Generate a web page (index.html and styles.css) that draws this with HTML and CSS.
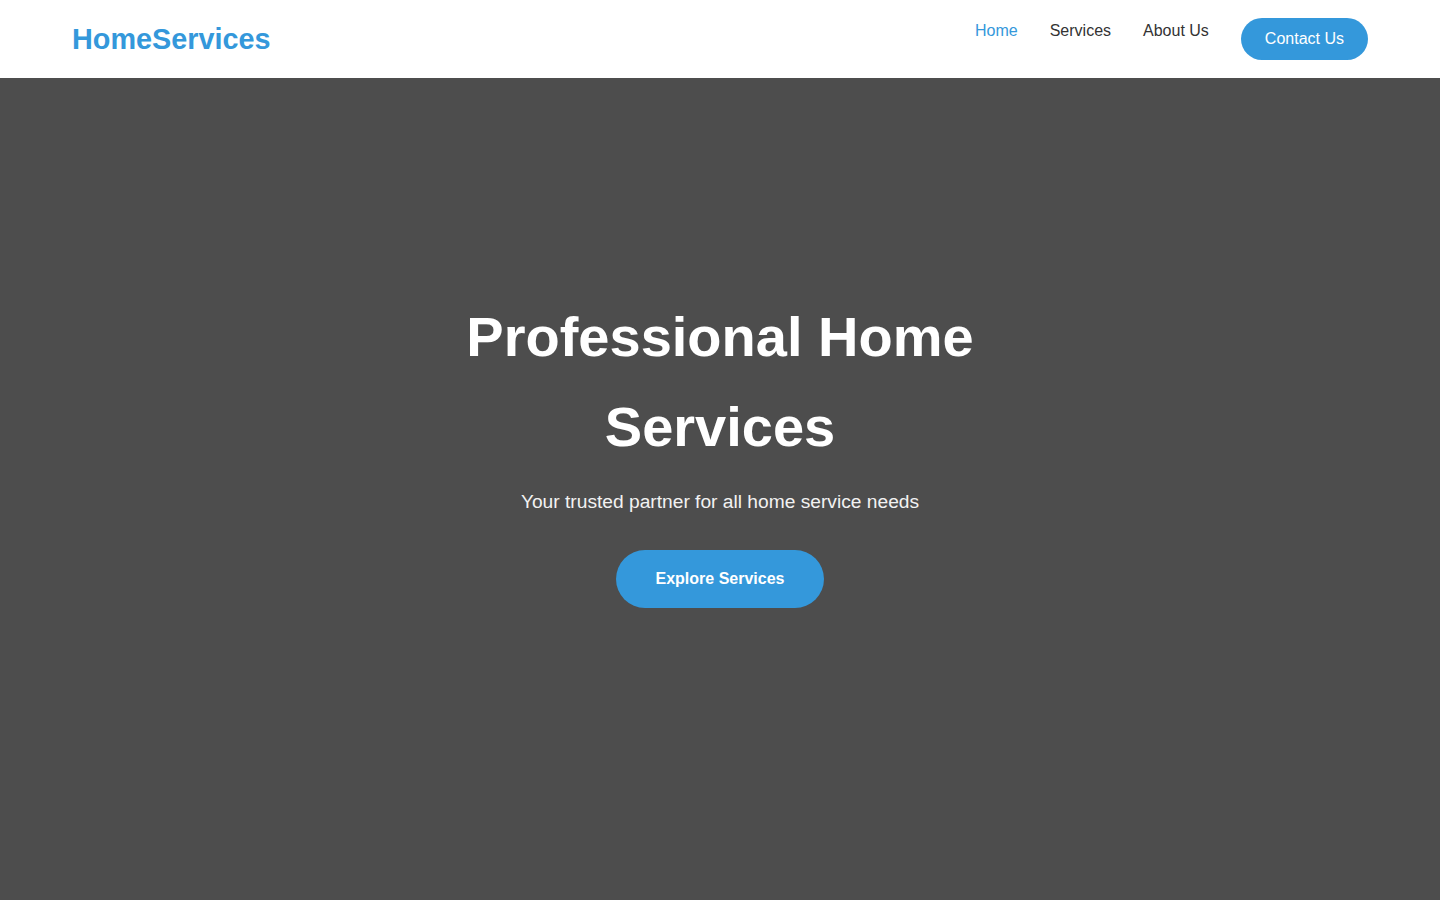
FILE: index.html
```html
<!DOCTYPE html>
<html lang="en">
<head>
<meta charset="utf-8">
<title>HomeServices</title>
<link rel="stylesheet" href="styles.css">
</head>
<body>
<header class="site-header">
  <a class="logo" href="#">HomeServices</a>
  <nav class="nav">
    <a class="nav-link active" href="#">Home</a>
    <a class="nav-link" href="#">Services</a>
    <a class="nav-link" href="#">About Us</a>
    <a class="nav-btn" href="#">Contact Us</a>
  </nav>
</header>
<section class="hero">
  <div class="hero-content">
    <h1 class="hero-title">Professional Home Services</h1>
    <p class="hero-sub">Your trusted partner for all home service needs</p>
    <a class="hero-btn" href="#">Explore Services</a>
  </div>
</section>
</body>
</html>
```
FILE: styles.css
```css
* { box-sizing: border-box; }
html, body { margin: 0; padding: 0; }
body {
  font-family: "Liberation Sans", Arial, sans-serif;
  background: #4d4d4d;
  height: 900px;
  overflow: hidden;
}
a { text-decoration: none; }
.site-header {
  height: 78px;
  background: #fff;
  display: flex;
  justify-content: space-between;
  align-items: flex-start;
  padding: 0 72px;
}
.logo {
  color: #3498db;
  font-weight: bold;
  font-size: 28.8px;
  line-height: 33px;
  margin-top: 23px;
}
.nav {
  display: flex;
  align-items: flex-start;
  gap: 32px;
  padding-top: 18px;
}
.nav-link {
  color: #333;
  font-size: 16px;
  line-height: 18px;
  margin-top: 4px;
}
.nav-link.active { color: #3498db; }
.nav-btn {
  background: #3498db;
  color: #fff;
  font-size: 16px;
  line-height: 18px;
  padding: 12px 24px;
  border-radius: 25px;
}
.hero {
  height: 822px;
  background: #4d4d4d;
  display: flex;
  justify-content: center;
  padding-top: 214px;
}
.hero-content {
  width: 600px;
  text-align: center;
  display: flex;
  flex-direction: column;
  align-items: center;
}
.hero-title {
  margin: 0;
  color: #fff;
  font-size: 56px;
  line-height: 90px;
  font-weight: bold;
}
.hero-sub {
  margin: 19px 0 0;
  color: #f2f2f2;
  font-size: 19.2px;
  line-height: 22px;
}
.hero-btn {
  margin-top: 37px;
  background: #3498db;
  color: #fff;
  font-weight: bold;
  font-size: 16px;
  line-height: 18px;
  padding: 20px 40px;
  border-radius: 30px;
}
```
